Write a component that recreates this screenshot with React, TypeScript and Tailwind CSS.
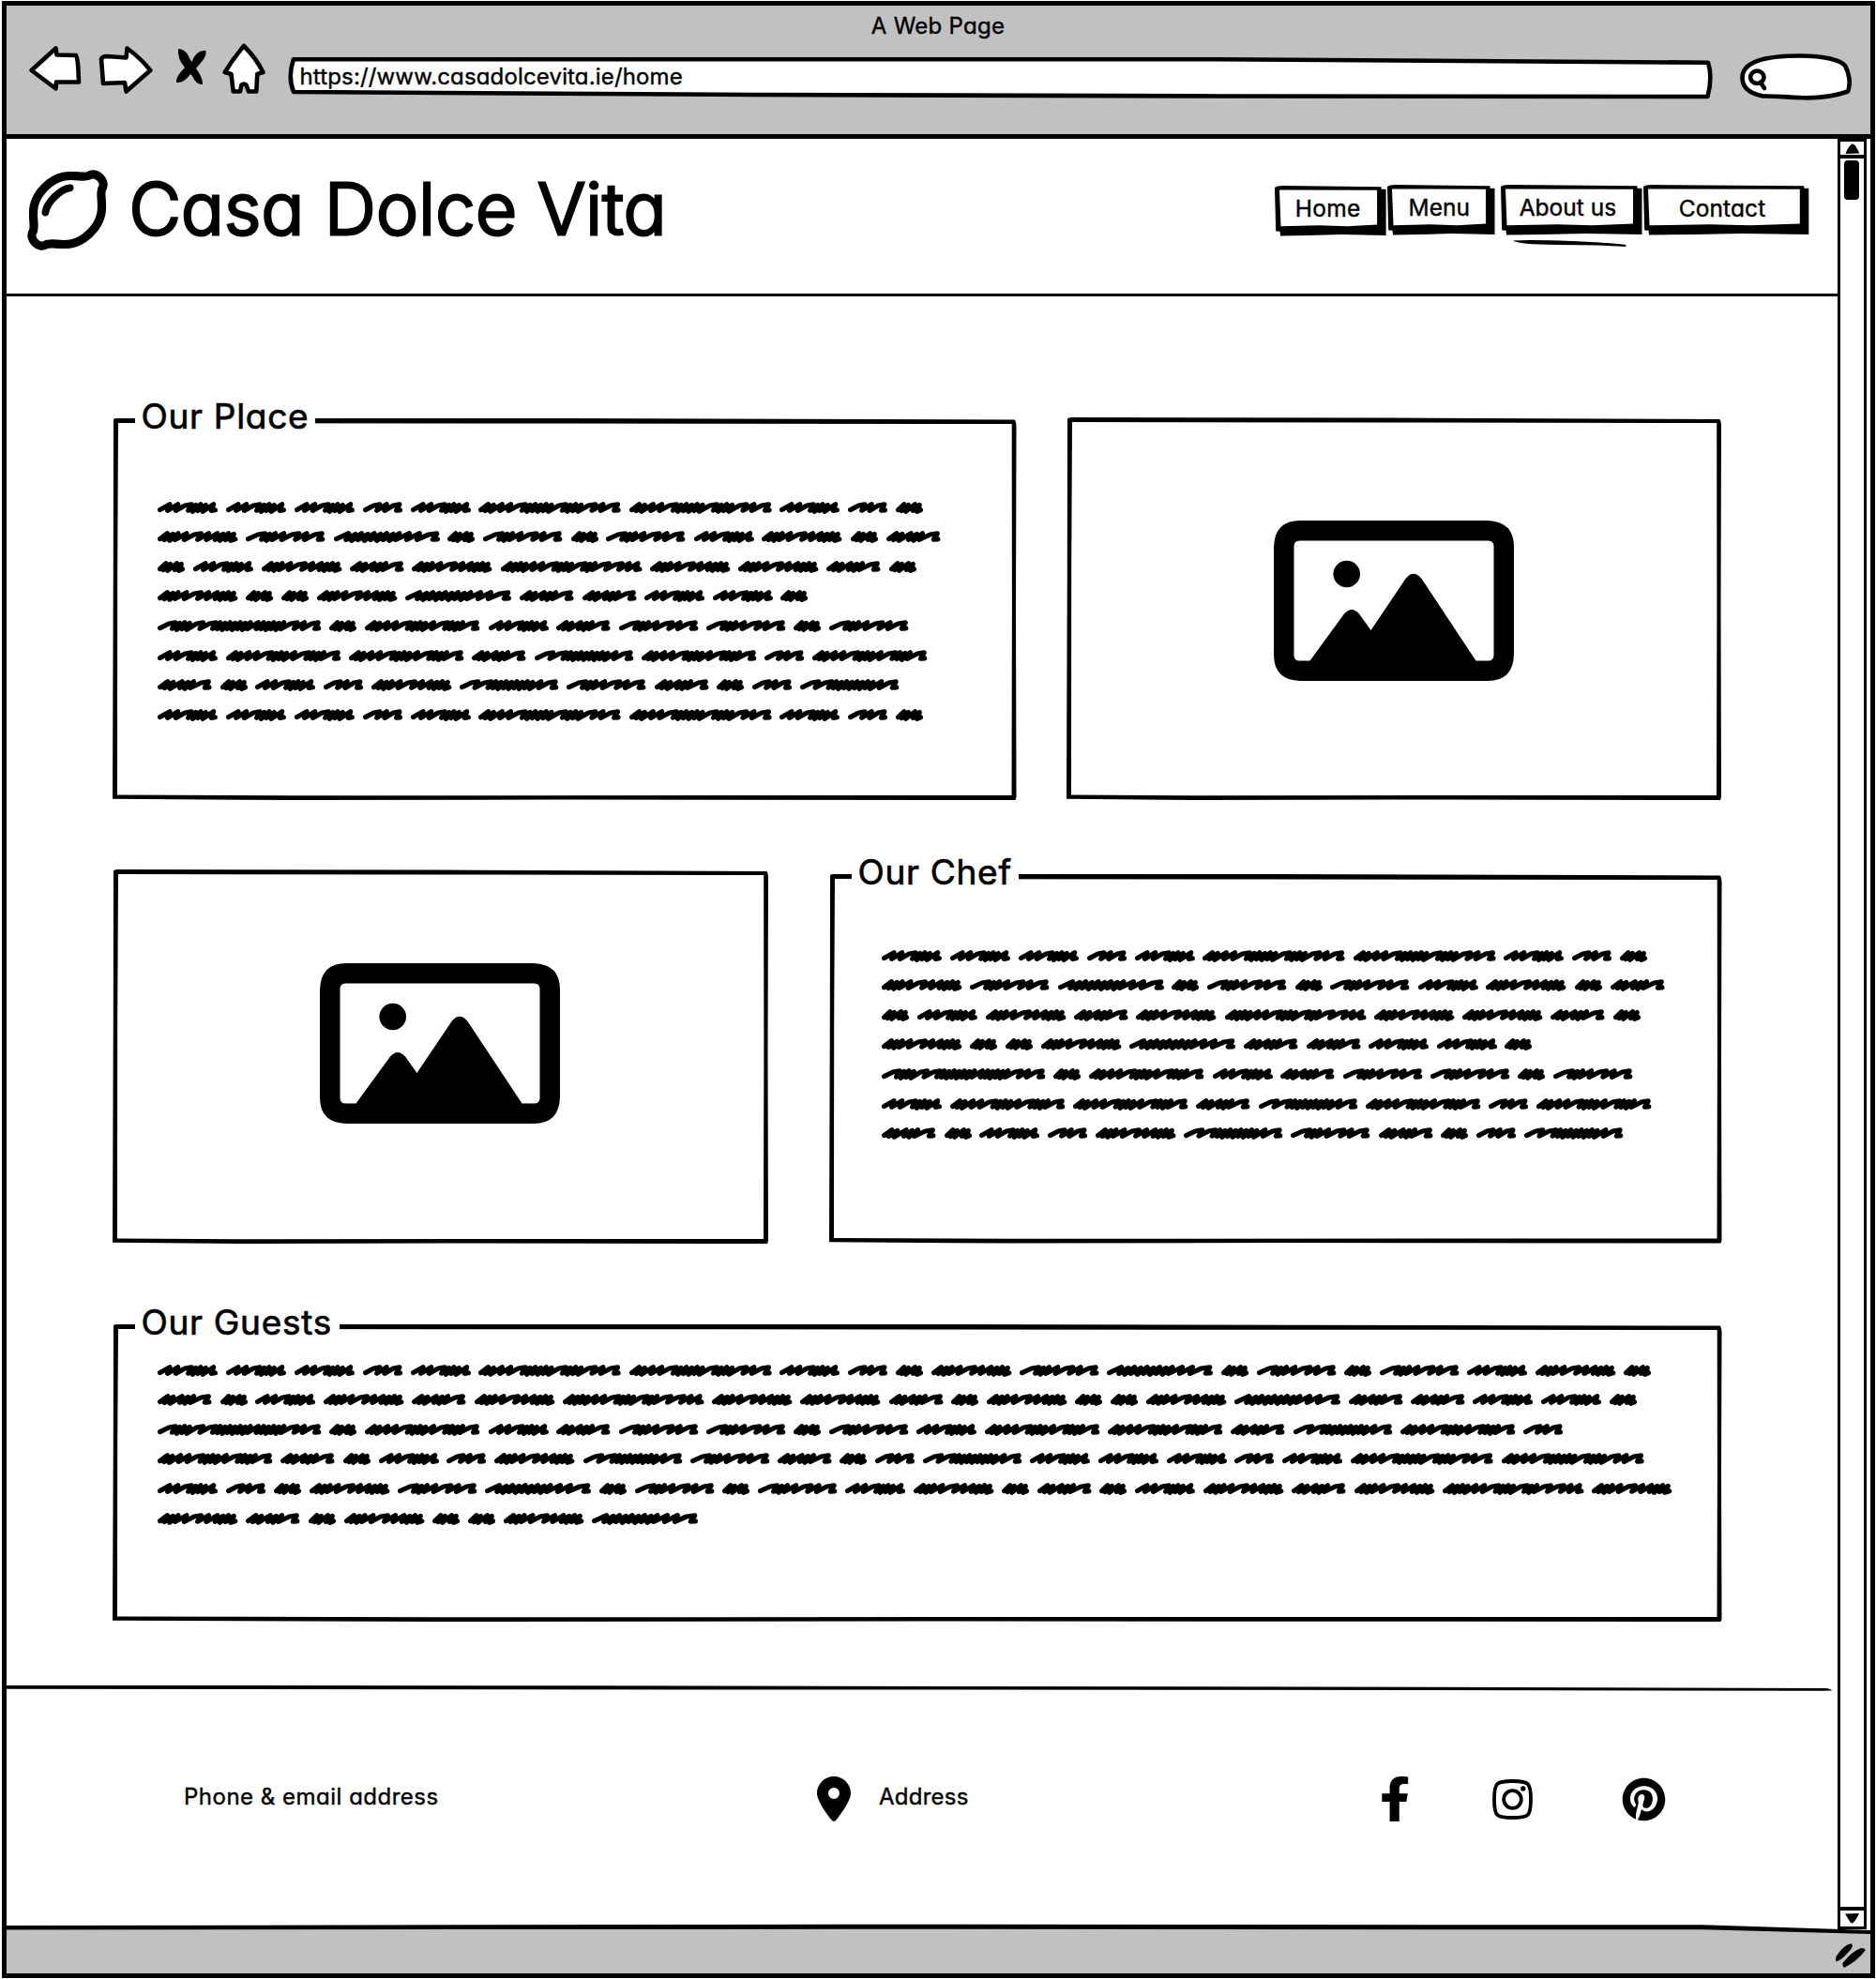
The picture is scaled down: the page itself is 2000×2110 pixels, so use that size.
import React from "react";
import { FaRegLemon, FaFacebookF, FaPinterest } from "react-icons/fa";
import { FaLocationDot } from "react-icons/fa6";

/* Scribbled placeholder words: total advance width and stroke rhythm.
   n = long diagonal, v = short zigzag, t = tight zigzag. */
const WORDS: Record<string, { w: number; s: string }> = {
  A: { w: 72.8, s: "vvntttv" },
  B: { w: 50.9, s: "nvn" },
  C: { w: 37.9, s: "ttvt" },
  D: { w: 94.2, s: "tttvnvvttt" },
  E: { w: 93.2, s: "nttvnvn" },
  F: { w: 121.8, s: "vttttttttvvn" },
  G: { w: 66.3, s: "ttvttn" },
  H: { w: 183.2, s: "ntttnntttttttvtttttnvn" },
  I: { w: 131.2, s: "ttvvntttvntttn" },
  J: { w: 114.1, s: "nnttttttttvn" },
  L: { w: 160.5, s: "ttvvntttttntttnvn" },
  M: { w: 159.3, s: "ttttvvntttnttnnvv" },
};
const GAP = 8.8;

function wordPoints(code: string): string {
  const { w, s } = WORDS[code];
  const pts: [number, number][] = [[0, 8.6]];
  let x = 0;
  s.split("").forEach((c, i) => {
    if (c === "n") {
      pts.push([x + 8, 4], [x + 14, 2.9], [x + 11, 9.2]);
      x += 11.5;
    } else if (c === "v") {
      pts.push([x + 9, 2.7], [x + 7, 9.4]);
      x += 7.5;
    } else {
      pts.push([x + 6.4, i % 2 ? 3.5 : 2.7], [x + 3.6, i % 2 ? 10.3 : 9.5]);
      x += 4.6;
    }
  });
  pts.push([x + 3, 8.8]);
  const k = (w - GAP - 5.2) / Math.max(...pts.map((p) => p[0]));
  return pts.map((p) => `${(2.6 + p[0] * k).toFixed(1)},${p[1]}`).join(" ");
}

function Scribble({ lines }: { lines: string[] }) {
  return (
    <div className="flex flex-col">
      {lines.map((line, i) => (
        <div key={i} className="flex h-[31.67px]">
          {line.split("").map((c, j) => (
            <svg key={j} width={WORDS[c].w} height="13" className="shrink-0 overflow-visible">
              <polyline points={wordPoints(c)} fill="none" stroke="#000" strokeWidth="5.2" strokeLinecap="round" strokeLinejoin="round" />
            </svg>
          ))}
        </div>
      ))}
    </div>
  );
}

function Panel({ w, h, legend, legendClass = "", className = "", children }: {
  w: number; h: number; legend?: string; legendClass?: string; className?: string; children?: React.ReactNode;
}) {
  const lean = legend ? 0 : 0.5;
  return (
    <section className={`relative shrink-0 ${className}`} style={{ width: w, height: h }}>
      <svg width={w} height={h} className="absolute inset-0">
        <path
          fillRule="evenodd"
          d={`M1 ${1 + lean} Q2 0 5 0 L${w * 0.5} ${lean} L${w - 2} ${1.5 + lean} Q${w - 0.5} 2 ${w} 8 L${w - 0.5} ${h * 0.5} L${w} ${h - 3} L${w - 1} ${h} L${w * 0.5} ${h - 0.5} L${w * 0.2} ${h} L0 ${h - 1.2} L0.8 ${h * 0.4} Z
             M6 5 L5.2 ${h * 0.4} L5 ${h - 5.5} L${w * 0.2} ${h - 4.8} L${w - 5} ${h - 5} L${w - 4.6} ${h * 0.5} L${w - 4.8} 6 L${w * 0.5} 5.5 Z`}
        />
      </svg>
      {legend && (
        <h2 className={`absolute left-[24px] top-[-24.5px] h-[44px] bg-white pl-[6.5px] text-[37px] leading-[44px] tracking-[0.7px] whitespace-nowrap [-webkit-text-stroke:0.7px_#000] ${legendClass}`}>
          {legend}
        </h2>
      )}
      {children}
    </section>
  );
}

function PictureIcon() {
  return (
    <svg width="256" height="171" viewBox="0 0 256 171">
      <path
        fillRule="evenodd"
        d="M28 0H228Q256 1 256 28V143Q255 171 228 171H28Q0 170 0 143V28Q1 0 28 0ZM27.5 21.5Q21.5 21.5 21.5 27.5V143.5Q21.5 149.5 27.5 149.5H38.5L75 99.5Q83 90.5 91 99.5L103.5 117L140.5 62Q149 51.5 157.5 62L215.5 149.5H228.5Q234.5 149.5 234.5 143.5V27.5Q234.5 21.5 228.5 21.5Z"
      />
      <circle cx="77.7" cy="57" r="14.3" />
    </svg>
  );
}

function NavButton({ label, w, textClass, className = "", active = false }: {
  label: string; w: number; textClass: string; className?: string; active?: boolean;
}) {
  return (
    <a className={`relative flex h-[53px] shrink-0 justify-center text-[24.5px] leading-[30px] whitespace-nowrap ${className}`} style={{ width: w }}>
      <svg width={w} height="53" className="absolute inset-0 overflow-visible">
        <path d={`M0 2 Q2 0 9 0 L${w - 5} 1.3 V3.7 H${w} V53 L${w * 0.6} 52 L${w * 0.3} 53 L6 53.5 L5.5 48.7 L1.2 48.5 Z`} />
        <path fill="#fff" d={`M5 4.5 L${w - 9.5} 4.7 V41.5 L${w * 0.65} 43.3 L${w * 0.4} 42.3 L6.5 43.3 Z`} />
        {active && <path d="M13 59.5 Q30 58.3 75 60 Q120 62.2 133.5 64 Q134 66.3 132 66 Q105 64 60 64 Q18 63.5 13 59.5Z" />}
      </svg>
      <span className={`relative ${textClass}`}>{label}</span>
    </a>
  );
}

const ink = { fill: "#fff", stroke: "#000", strokeWidth: 4.6, strokeLinejoin: "round" as const, strokeLinecap: "round" as const };

function BrowserBar() {
  return (
    <header className="h-[142px] border-b-[5px] border-black bg-[#c1c1c1]">
      <div className="flex h-[40px] justify-center text-[24px] leading-[43px]">
        <span className="ml-[-1px] tracking-[0.25px]">A Web Page</span>
      </div>
      <div className="flex h-[62px] pl-[23px]">
        <svg width="58" height="62" viewBox="30 46 58 62"><path {...ink} d="M33.5 75 L59.5 51.5 L60.5 58.5 L81 59 Q82.5 59.5 83.5 75 L84 87.5 L60 87.5 L59.5 94.5 Z" /></svg>
        <svg className="ml-[16px]" width="60" height="62" viewBox="104 46 60 62"><path {...ink} d="M108 63 Q109 60 114 60 L134.5 61.5 L135.5 51.5 Q150 62 160.3 75 L134.5 97.5 L133 88 L110 89 Z" /></svg>
        <svg className="ml-[22px]" width="36" height="62" viewBox="186 46 36 62"><path d="M190 52 Q198 52 202 62 L204.5 66 Q209 53 219.5 54 Q220.5 60 214 67 L209 73 Q216 82 216 90 Q209 90.5 205 81 L203 79 Q196 89 188 88 Q187 82 197 72 Q189 63 190 52Z" /></svg>
        <svg className="ml-[14px]" width="48" height="62" viewBox="236 46 48 62"><path {...ink} d="M260 49 Q248 63 239.8 77 L246.5 79 L248.7 97.5 L256 97.5 L257.5 90.5 Q260 88.5 262.5 90.5 L265 97.5 L273.3 97.5 L274.3 79 L280.5 77 Q273 62 260 49 Z" /></svg>
        <div className="relative ml-[23px] h-[62px] w-[1520px] text-[24px]">
          <svg width="1520" height="62" viewBox="307 46 1520 62" className="absolute inset-0">
            <path {...ink} d="M313 63.3 L1300 63.3 L1821 66.7 Q1826 82 1820.5 103 L1300 102.5 L800 101 L313 98 Q306.5 82 313 63.3 Z" />
          </svg>
          <span className="relative ml-[12.500px] leading-[71px] tracking-[0.15px]">https://www.casadolcevita.ie/home</span>
        </div>
        <svg className="ml-[27px]" width="122" height="62" viewBox="1854 46 122 62">
          <path {...ink} d="M1857.5 83 C1857.5 66 1880 59.5 1919 59.5 C1945 59.5 1962 64 1967 70 C1971 77 1973.5 88 1970 97.5 C1960 101 1945 105 1922 104.3 C1900 103.5 1893 102 1880 102.5 C1866 100 1857.5 94 1857.5 83Z" />
          <ellipse cx="1873.3" cy="82.3" rx="7.2" ry="6.7" fill="none" stroke="#000" strokeWidth="4.6" />
          <path d="M1877 88 L1881 94" {...ink} />
        </svg>
      </div>
    </header>
  );
}

function ScrollBar() {
  return (
    <aside className="flex w-[31px] shrink-0 flex-col border-x-[3.5px] border-y-[3px] border-black bg-white">
      <div className="flex h-[18px] shrink-0 items-center justify-center border-b-[4px] border-black">
        <svg width="16" height="11"><path d="M0.5 11 Q3 4 7 0.5 Q10 0 12 4 L15.5 10.5Z" /></svg>
      </div>
      <div className="ml-[4px] mt-[2px] h-[42px] w-[16px] rounded-[4px] bg-black" />
      <div className="grow" />
      <div className="flex h-[21px] shrink-0 items-center justify-center border-t-[4px] border-black">
        <svg width="15" height="11"><path d="M0 0.5 L15 0 Q12 7 8 10.5 Q6 11 4 7Z" /></svg>
      </div>
    </aside>
  );
}

export default function App() {
  return (
    <div className="h-[2110px] w-[2000px] overflow-hidden bg-white pl-[2px] pt-px font-[Inter,'Liberation_Sans',sans-serif] text-black [-webkit-text-stroke:0.4px_#000] [font-feature-settings:'cv11'] [stroke-linejoin:round]">
      <div className="flex h-[2108px] w-[1997px] flex-col border-[5px] border-black">
        <BrowserBar />
        <div className="flex h-[1909px] shrink-0">
          <main className="flex w-[1952px] shrink-0 flex-col">
            <div className="flex h-[168px] items-start border-b-[3.5px] border-black">
              <FaRegLemon size={84} className="ml-[23px] mt-[34px] shrink-0 overflow-visible [stroke-width:8]" />
              <h1 className="ml-[23.400px] mt-[20px] w-[1221px] text-[76px] font-light leading-[108px] tracking-[0.25px] whitespace-nowrap [-webkit-text-stroke:3px_#000]">Casa Dolce Vita</h1>
              <nav className="mt-[49px] flex">
                <NavButton label="Home" w={118.6} className="mt-[1px] ml-[1px]" textClass="mt-[9px] ml-[-6px] tracking-[0.3px]" />
                <NavButton label="Menu" w={114.5} className="ml-[1.500px]" textClass="mt-[9px] ml-[-5px]" />
                <NavButton label="About us" w={150.5} className="ml-[5.700px]" textClass="mt-[9px] ml-[-7px]" active />
                <NavButton label="Contact" w={176.3} className="ml-[1.700px]" textClass="mt-[10px] ml-[-8px] tracking-[0.1px]" />
              </nav>
            </div>

            <div className="mt-[130px] ml-[113px] flex items-start">
              <Panel w={963.5} h={407} legend="Our Place" legendClass="w-[192px]">
                <div className="pl-[48.300px] pt-[88.500px]">
                  <Scribble lines={["AAABALLABC", "DEFCECEADCG", "CADGDMDDGC", "DCCDFGGAAC", "HCIAGEECE", "AIIGJIBI", "GCABDJEGCBJ", "AAABALLABC"]} />
                </div>
              </Panel>
              <Panel w={698} h={408} className="ml-[53px] mt-[-1px] flex items-start justify-center">
                <div className="relative mt-[110px]"><PictureIcon /></div>
              </Panel>
            </div>

            <div className="mt-[74px] ml-[113px] flex items-start">
              <Panel w={699} h={399} className="flex items-start justify-center">
                <div className="relative mt-[100px] ml-[-1px]"><PictureIcon /></div>
              </Panel>
              <Panel w={951.5} h={393.5} legend="Our Chef" legendClass="w-[178px]" className="ml-[65px] mt-[5px]">
                <div className="pl-[56.300px] pt-[80.500px]">
                  <Scribble lines={["AAABALLABC", "DEFCECEADCG", "CADGDMDDGC", "DCCDFGGAAC", "HCIAGEECE", "AIIGJIBI", "GCABDJEGCBJ"]} />
                </div>
              </Panel>
            </div>

            <div className="mt-[86px] ml-[113px] flex">
              <Panel w={1715.5} h={317} legend="Our Guests" legendClass="w-[218px]">
                <div className="pl-[48.300px] pt-[42.500px]">
                  <Scribble lines={["AAABALLABCDEFCECEADC", "GCADGDMDDGCDCCDFGGAAC", "HCIAGEECEAIIGJIB", "IGCABDJEGCBJAAABALL", "ABCDEFCECEADCGCADGDMD", "DGCDCCDF"]} />
                </div>
              </Panel>
            </div>

            <footer className="mt-[68px] flex flex-col">
              <svg width="1952" height="7"><path d="M0 0 L600 0.3 L1400 1.5 L1940 3 Q1946 4 1946 5.5 L1935 5.7 L1300 4.8 L0 3.8Z" /></svg>
              <div className="mt-[90px] flex h-[48px] items-start text-[24px] leading-[43px]">
                <span className="ml-[189px] w-[675px] tracking-[0.5px]">Phone &amp; email address</span>
                <FaLocationDot className="h-[48px] w-[36px] [stroke-width:0]" />
                <span className="ml-[30px] w-[534px] tracking-[0.25px]">Address</span>
                <FaFacebookF preserveAspectRatio="none" className="h-[48px] w-[32.500px] [stroke-width:0]" />
                <svg className="ml-[87px] mt-[3px]" width="43" height="43" viewBox="0 0 43 43" fill="none" stroke="#000" strokeWidth="3.8">
                  <path d="M2 21.5 C2 4 4 2 21.5 2 S41 4 41 21.5 S39 41 21.5 41 S2 39 2 21.5Z" />
                  <circle cx="21.5" cy="21.5" r="9.3" />
                  <circle cx="32.8" cy="10" r="2.7" fill="#000" stroke="none" />
                </svg>
                <FaPinterest className="ml-[95px] mt-px h-[47px] w-[47px] [stroke-width:0]" />
              </div>
            </footer>
          </main>
          <ScrollBar />
        </div>
        <div className="relative h-[47px] shrink-0">
          <svg width="1987" height="53" viewBox="7 2051 1987 53" className="absolute bottom-0 left-0">
            <path fill="#c1c1c1" d="M7 2054 H1800 L1994 2060 V2104 H7Z" />
            <path d="M7 2053 L900 2051.8 L1815 2052.3 L1994 2058 V2062 L1815 2057.3 L900 2056.8 L7 2057.5Z" />
            <path d="M1957.5 2086 Q1966 2073 1974 2072.3 Q1977 2075 1970 2082 Q1963 2090 1957.5 2091.5 Q1956.5 2089 1957.5 2086Z" />
            <path d="M1964.5 2093 Q1975 2080 1984 2077 Q1989 2077 1988.5 2079.5 Q1980 2091 1966 2098 Q1964 2096 1964.5 2093Z" />
          </svg>
        </div>
      </div>
    </div>
  );
}
